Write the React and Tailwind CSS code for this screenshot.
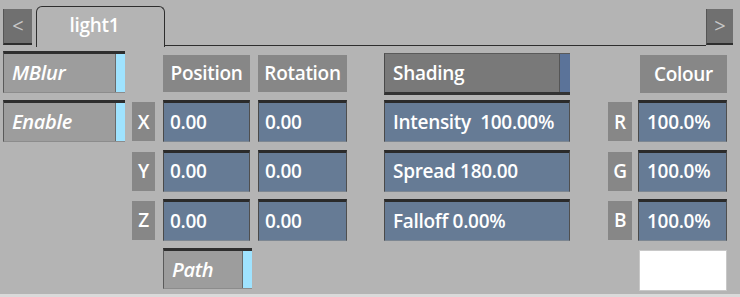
import React from "react";

const font = { fontFamily: '"Open Sans", "DejaVu Sans", sans-serif' };

function Label({ children, className = "" }) {
  return (
    <div
      className={
        "flex items-center justify-center bg-[#878787] text-white font-semibold text-[19px] tracking-[-0.3px] " +
        className
      }
    >
      {children}
    </div>
  );
}

function Field({ children, className = "" }) {
  return (
    <div
      className={
        "flex items-center bg-[#667b95] text-white font-semibold text-[19px] tracking-[-0.3px] whitespace-nowrap border-t-[3px] border-t-[#2a2a2a] border-l border-l-[#4a4a4a] border-r border-r-[#4f4f4f] border-b border-b-[#7d8792] " +
        className
      }
    >
      {children}
    </div>
  );
}

function Toggle({ children, className = "" }) {
  return (
    <div
      className={
        "flex bg-[#9d9d9d] border-t-[3px] border-t-[#2e2e2e] border-l border-l-[#5a5a5a] border-b border-b-[#8c8c8c] " +
        className
      }
    >
      <span className="flex-1 flex items-center pl-[8px] italic font-semibold text-white text-[20px] tracking-[-0.3px]">
        {children}
      </span>
      <div className="w-[10px] bg-[#9fe3ff] border-l border-l-[#6a6a6a]" />
    </div>
  );
}

export default function App() {
  return (
    <div className="w-[740px] h-[297px] bg-[#b4b4b4] overflow-hidden flex flex-col" style={font}>
      {/* header */}
      <div className="flex h-[47px] shrink-0">
        <div className="ml-[3px] mt-[9px] w-[29px] h-[36px] bg-[#707070] border-b-2 border-b-[#2e2e2e] border-l border-l-[#555] flex items-center justify-center text-[#c8c8c8] text-[20px]">
          &lt;
        </div>
        <div className="ml-[4px] mt-[6px] w-[129px] h-[41px] border border-b-0 border-[#2e2e2e] rounded-t-[6px] flex items-center justify-center pr-[12px] pb-[4px] text-white font-semibold text-[19px] tracking-[-0.3px]">
          light1
        </div>
        <div className="flex-1 h-[46px] border-b border-b-[#2e2e2e]" />
        <div className="mt-[9px] w-[27px] h-[36px] bg-[#707070] border-b-2 border-b-[#2e2e2e] border-l border-l-[#555] flex items-center justify-center text-[#c8c8c8] text-[20px]">
          &gt;
        </div>
        <div className="w-[7px]" />
      </div>

      {/* body */}
      <div className="mt-[4px] pl-[3px] grid grid-cols-[122px_7px_23px_8px_87px_8px_89px_37px_186px_38px_24px_6px_89px] grid-rows-[42px_42px_42px_42px_42px] gap-y-[7.25px]">
        {/* row 0 */}
        <Toggle className="col-start-1 row-start-1">MBlur</Toggle>
        <Label className="col-start-5 row-start-1 mt-[4px] h-[37px]">Position</Label>
        <Label className="col-start-7 row-start-1 mt-[4px] h-[37px]">Rotation</Label>
        <div className="col-start-9 row-start-1 mt-[2px] h-[42px] flex bg-[#797979] border-t border-t-[#5a5a5a] border-l border-l-[#4a4a4a] border-b-[3px] border-b-[#333]">
          <span className="flex-1 flex items-center pl-[8px] text-white font-semibold text-[19px] tracking-[-0.3px]">
            Shading
          </span>
          <div className="w-[11px] bg-[#5b7399] border-l border-l-[#555]" />
        </div>
        <Label className="col-start-13 row-start-1 mt-[4px] h-[38px] ml-[2px] w-[87px]">Colour</Label>

        {/* row 1 */}
        <Toggle className="col-start-1 row-start-2">Enable</Toggle>
        <Label className="col-start-3 row-start-2 mt-[2px] h-[39px]">X</Label>
        <Field className="col-start-5 row-start-2 pl-[6px]">0.00</Field>
        <Field className="col-start-7 row-start-2 pl-[6px]">0.00</Field>
        <Field className="col-start-9 row-start-2 pl-[8px]">Intensity&nbsp;&nbsp;100.00%</Field>
        <Label className="col-start-11 row-start-2 mt-[2px] h-[39px]">R</Label>
        <Field className="col-start-13 row-start-2 pl-[8px]">100.0%</Field>

        {/* row 2 */}
        <Label className="col-start-3 row-start-3 mt-[2px] h-[39px]">Y</Label>
        <Field className="col-start-5 row-start-3 pl-[6px]">0.00</Field>
        <Field className="col-start-7 row-start-3 pl-[6px]">0.00</Field>
        <Field className="col-start-9 row-start-3 pl-[8px]">Spread 180.00</Field>
        <Label className="col-start-11 row-start-3 mt-[2px] h-[39px]">G</Label>
        <Field className="col-start-13 row-start-3 pl-[8px]">100.0%</Field>

        {/* row 3 */}
        <Label className="col-start-3 row-start-4 mt-[2px] h-[39px]">Z</Label>
        <Field className="col-start-5 row-start-4 pl-[6px]">0.00</Field>
        <Field className="col-start-7 row-start-4 pl-[6px]">0.00</Field>
        <Field className="col-start-9 row-start-4 pl-[8px]">Falloff 0.00%</Field>
        <Label className="col-start-11 row-start-4 mt-[2px] h-[39px]">B</Label>
        <Field className="col-start-13 row-start-4 pl-[8px]">100.0%</Field>

        {/* row 4 */}
        <Toggle className="col-start-5 col-end-7 row-start-5 w-[89px] h-[41px]">Path</Toggle>
        <div className="col-start-13 row-start-5 mt-[2px] ml-[1px] w-[88px] h-[41px] bg-white border border-[#c8c8c8]" />
      </div>
      <div className="flex-1" />
      <div className="h-[3px] bg-[#dadada] shrink-0" />
    </div>
  );
}
